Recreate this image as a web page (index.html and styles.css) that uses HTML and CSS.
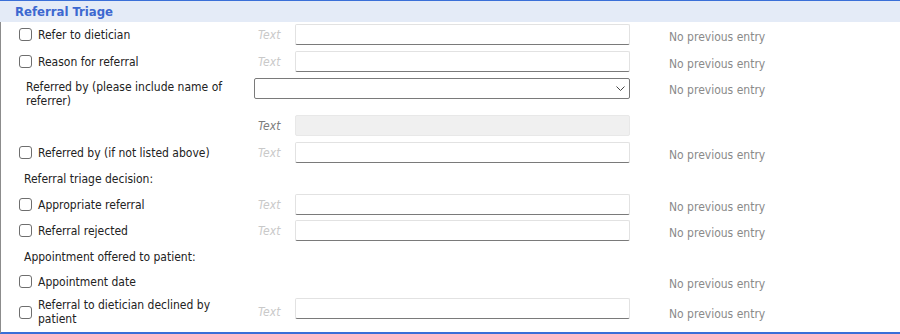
FILE: index.html
```html
<!DOCTYPE html>
<html>

<head>
  <meta charset="UTF-8">
  <title>Referral Triage</title>
  <link rel="stylesheet" href="styles.css">
</head>

<body>
  <div class="panel">
    <div class="panel-head">Referral Triage</div>

    <div class="form">
      <div class="row">
        <label class="check"><input type="checkbox"><span>Refer to dietician</span></label>
        <span class="hint">Text</span>
        <input class="field" type="text">
        <span></span>
        <span class="prev">No previous entry</span>
      </div>

      <div class="row">
        <label class="check"><input type="checkbox"><span>Reason for referral</span></label>
        <span class="hint">Text</span>
        <input class="field" type="text">
        <span></span>
        <span class="prev">No previous entry</span>
      </div>

      <div class="row row-tall">
        <span class="plain">Referred by (please include name of referrer)</span>
        <div class="select">
          <svg width="9" height="5" viewBox="0 0 9 5"><polyline points="0.5,0.5 4.5,4.5 8.5,0.5" fill="none" stroke="#444" stroke-width="1"/></svg>
        </div>
        <span></span>
        <span class="prev">No previous entry</span>
      </div>

      <div class="row">
        <span></span>
        <span class="hint hint-dark">Text</span>
        <input class="field" type="text" disabled>
      </div>

      <div class="row">
        <label class="check"><input type="checkbox"><span>Referred by (if not listed above)</span></label>
        <span class="hint">Text</span>
        <input class="field" type="text">
        <span></span>
        <span class="prev">No previous entry</span>
      </div>

      <div class="row row-section">
        <span class="section">Referral triage decision:</span>
      </div>

      <div class="row tight">
        <label class="check"><input type="checkbox"><span>Appropriate referral</span></label>
        <span class="hint">Text</span>
        <input class="field" type="text">
        <span></span>
        <span class="prev">No previous entry</span>
      </div>

      <div class="row">
        <label class="check"><input type="checkbox"><span>Referral rejected</span></label>
        <span class="hint">Text</span>
        <input class="field" type="text">
        <span></span>
        <span class="prev">No previous entry</span>
      </div>

      <div class="row row-section tight">
        <span class="section">Appointment offered to patient:</span>
      </div>

      <div class="row tight">
        <label class="check"><input type="checkbox"><span>Appointment date</span></label>
        <span></span>
        <span></span>
        <span></span>
        <span class="prev">No previous entry</span>
      </div>

      <div class="row row-wrap">
        <label class="check"><input type="checkbox"><span>Referral to dietician declined by patient</span></label>
        <span class="hint">Text</span>
        <input class="field" type="text">
        <span></span>
        <span class="prev">No previous entry</span>
      </div>
    </div>
  </div>
</body>

</html>
```

FILE: styles.css
```css
body {
  margin: 0;
  font-family: "DejaVu Sans Condensed", "Liberation Sans", sans-serif;
  font-size: 12px;
  color: #222;
  background: #fff;
}

.panel {
  height: 334px;
  box-sizing: border-box;
  border-top: 1px solid #3a6fd8;
  border-bottom: 2px solid #3a6fd8;
  display: flex;
  flex-direction: column;
}

.panel-head {
  height: 21px;
  padding-left: 15px;
  background: #e4ebf7;
  color: #3c68d0;
  font-weight: bold;
  font-size: 13px;
  line-height: 21px;
}

.form {
  flex: 1;
  border-left: 1px solid #8c8c8c;
  padding: 2px 0 0 18px;
}

.row {
  display: grid;
  grid-template-columns: 235px 41px 335px 39px 1fr;
  align-items: center;
  height: 21px;
  margin-bottom: 6px;
  line-height: 14px;
}

.tight {
  margin-bottom: 5px;
}

.row-tall {
  height: 31px;
  align-items: start;
}

.row-section {
  height: 19px;
}

.row-wrap {
  height: 30px;
}

.row-wrap .field {
  align-self: start;
  margin-top: 1px;
}

.check {
  display: flex;
  align-items: center;
  gap: 6px;
  padding-right: 12px;
}

.check input {
  appearance: none;
  flex: none;
  width: 13px;
  height: 13px;
  margin: 0;
  border: 1px solid #6e6e6e;
  border-radius: 3px;
  background: #fff;
}

.plain {
  padding: 2px 12px 0 7px;
}

.section {
  padding-left: 5px;
}

.hint {
  padding-left: 4px;
  font-style: italic;
  color: #c9c9c9;
}

.hint-dark {
  color: #7c7c7c;
}

.field {
  width: 335px;
  height: 21px;
  box-sizing: border-box;
  margin: 0;
  border: 1px solid #e2e2e2;
  border-bottom-color: #7a7a7a;
  border-radius: 2px;
  background: #fff;
}

.field:disabled {
  background: #f0f0f0;
  border-color: #e8e8e8;
}

.select {
  grid-column: 2 / 4;
  height: 21px;
  box-sizing: border-box;
  border: 1px solid #7a7a7a;
  border-radius: 2px;
  display: flex;
  justify-content: flex-end;
  align-items: center;
  padding-right: 4px;
}

.prev {
  padding-top: 4px;
  color: #8a8a8a;
  white-space: nowrap;
}

.row-tall .prev {
  padding-top: 5px;
}
```
